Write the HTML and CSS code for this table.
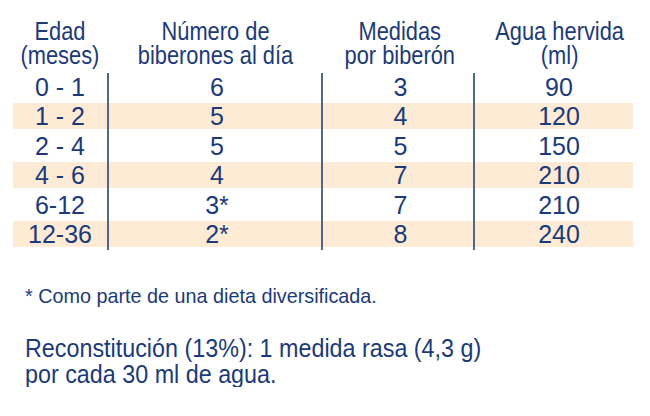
FILE: index.html
```html
<!DOCTYPE html>
<html lang="es">
<head>
<meta charset="utf-8">
<title>Tabla de preparación</title>
<link rel="stylesheet" href="styles.css">
</head>
<body>
<main class="page">
  <div class="table">
    <div class="head">
      <div class="cell"><span class="t">Edad<br>(meses)</span></div>
      <div class="cell c2"><span class="t">Número de<br>biberones al día</span></div>
      <div class="cell c3"><span class="t">Medidas<br>por biberón</span></div>
      <div class="cell c4"><span class="t">Agua hervida<br>(ml)</span></div>
    </div>
    <div class="row">
      <div class="cell">0 - 1</div>
      <div class="cell c2 line">6</div>
      <div class="cell c3 line">3</div>
      <div class="cell c4 line">90</div>
    </div>
    <div class="row alt">
      <div class="cell">1 - 2</div>
      <div class="cell c2 line">5</div>
      <div class="cell c3 line">4</div>
      <div class="cell c4 line">120</div>
    </div>
    <div class="row">
      <div class="cell">2 - 4</div>
      <div class="cell c2 line">5</div>
      <div class="cell c3 line">5</div>
      <div class="cell c4 line">150</div>
    </div>
    <div class="row alt">
      <div class="cell">4 - 6</div>
      <div class="cell c2 line">4</div>
      <div class="cell c3 line">7</div>
      <div class="cell c4 line">210</div>
    </div>
    <div class="row">
      <div class="cell">6-12</div>
      <div class="cell c2 line">3*</div>
      <div class="cell c3 line">7</div>
      <div class="cell c4 line">210</div>
    </div>
    <div class="row alt">
      <div class="cell">12-36</div>
      <div class="cell c2 line">2*</div>
      <div class="cell c3 line">8</div>
      <div class="cell c4 line">240</div>
    </div>
  </div>
  <p class="note">* Como parte de una dieta diversificada.</p>
  <p class="recon"><span class="rt">Reconstitución (13%): 1 medida rasa (4,3 g)<br>por cada 30 ml de agua.</span></p>
</main>
</body>
</html>
```

FILE: styles.css
```css
html, body {
  margin: 0;
  padding: 0;
  background: #ffffff;
}

body {
  color: #1c3a78;
  font-family: "Liberation Sans", Arial, sans-serif;
}

.page {
  padding: 19px 0 0 13px;
  width: 620px;
}

.head,
.row {
  display: grid;
  grid-template-columns: 94px 214px 152px 160px;
}

.cell {
  text-align: center;
  white-space: nowrap;
}

.c2 { padding-left: 4px; }
.c3 { padding-left: 5px; }
.c4 { padding-left: 10px; }

.head {
  font-size: 26px;
  line-height: 24px;
  margin-bottom: 5.5px;
}

.t {
  display: inline-block;
  transform: scaleX(0.84);
  transform-origin: 50% 50%;
}

.row {
  height: 29.5px;
  font-size: 25px;
  line-height: 29.5px;
}

.row.alt {
  background: linear-gradient(to bottom,
    transparent 0, transparent 1px,
    #fdebd6 1px, #fdebd6 27.5px,
    transparent 27.5px);
}

.line {
  border-left: 2px solid #4d6a82;
}

.note {
  margin: 34.5px 0 0 12px;
  font-size: 19.8px;
  line-height: 24px;
  white-space: nowrap;
}

.recon {
  margin: 26.8px 0 0 12px;
  font-size: 26.5px;
  line-height: 26px;
  white-space: nowrap;
}

.rt {
  display: inline-block;
  transform: scaleX(0.88);
  transform-origin: 0 50%;
}
```
